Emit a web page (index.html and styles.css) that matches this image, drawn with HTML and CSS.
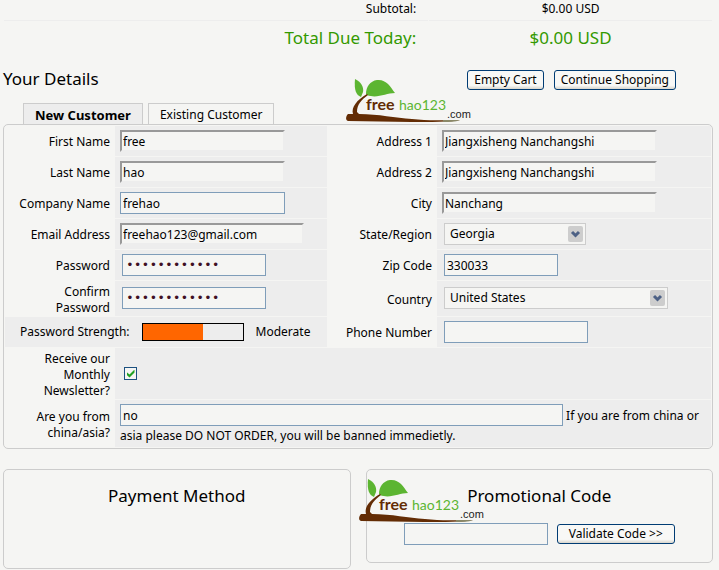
FILE: index.html
```html
<!DOCTYPE html>
<html lang="en">
<head>
<meta charset="utf-8">
<meta name="viewport" content="width=device-width, initial-scale=1">
<title>Checkout</title>
<link rel="stylesheet" href="styles.css">
</head>
<body>
<main class="page">
  <table class="totals">
    <tr class="subtotal"><th scope="row">Subtotal:</th><td>$0.00 USD</td></tr>
    <tr class="total"><th scope="row">Total Due Today:</th><td>$0.00 USD</td></tr>
  </table>

  <form>
    <header class="details-head">
      <h2>Your Details</h2>
      <svg class="logo logo-top" viewBox="0 0 126 46">
        <path class="leaf" d="M9 1C15 4 18 9 17 14L15 19C10 17 8 12 9 1Z"/>
        <path class="leaf" d="M20 16C20 9 24 3 31 2C40 1 44 8 49 15C40 15 31 21 21 17Z"/>
        <path class="branch" d="M21 16L22 17C15 22 11 27 11 34L13 36C33 36 49 40 66 41C82 43 98 42 114 42C105 44 84 44 65 44L2 43C-1 42 0 38 2 36L7 36C5 29 11 22 21 16Z"/>
        <path class="tip" d="M97 42H114C109 44 104 44 97 44Z"/>
        <text class="logo-free" x="20" y="32">free</text>
        <text class="logo-hao" x="53" y="32">hao123</text>
        <text class="logo-com" x="101" y="40">.com</text>
      </svg>
      <div class="actions">
        <button type="button" class="btn">Empty Cart</button>
        <button type="button" class="btn">Continue Shopping</button>
      </div>
    </header>

    <nav class="tabs">
      <button type="button" class="tab active">New Customer</button>
      <button type="button" class="tab">Existing Customer</button>
    </nav>

    <section class="panel details">
      <label class="name" for="first">First Name</label>
      <div class="field"><input class="inset w-name" id="first" type="text" value="free"></div>
      <label class="name" for="addr1">Address 1</label>
      <div class="field"><input class="inset w-addr" id="addr1" type="text" value="Jiangxisheng Nanchangshi"></div>

      <label class="name" for="last">Last Name</label>
      <div class="field"><input class="inset w-name" id="last" type="text" value="hao"></div>
      <label class="name" for="addr2">Address 2</label>
      <div class="field"><input class="inset w-addr" id="addr2" type="text" value="Jiangxisheng Nanchangshi"></div>

      <label class="name" for="company">Company Name</label>
      <div class="field"><input class="w-name" id="company" type="text" value="frehao"></div>
      <label class="name" for="city">City</label>
      <div class="field"><input class="inset w-addr" id="city" type="text" value="Nanchang"></div>

      <label class="name" for="email">Email Address</label>
      <div class="field"><input class="inset w-email" id="email" type="text" value="freehao123@gmail.com"></div>
      <label class="name" for="state">State/Region</label>
      <div class="field indent"><span class="select w-state"><select id="state"><option>Georgia</option></select><svg class="arrow" viewBox="0 0 15 16"><rect width="15" height="16" rx="2"/><path d="M4 6l3.500 3.500L11 6"/></svg></span></div>

      <label class="name" for="pw">Password</label>
      <div class="field indent"><input class="w-std pw" id="pw" type="password" value="abcdefghijkl"></div>
      <label class="name" for="zip">Zip Code</label>
      <div class="field indent"><input class="w-zip" id="zip" type="text" value="330033"></div>

      <label class="name" for="pw2">Confirm Password</label>
      <div class="field indent tall"><input class="w-std pw" id="pw2" type="password" value="abcdefghijkl"></div>
      <label class="name" for="country">Country</label>
      <div class="field indent tall"><span class="select w-country"><select id="country"><option>United States</option></select><svg class="arrow" viewBox="0 0 15 16"><rect width="15" height="16" rx="2"/><path d="M4 6l3.500 3.500L11 6"/></svg></span></div>

      <div class="field strength">
        <span>Password Strength:</span>
        <span class="meter"><span class="meter-fill" style="width:60%"></span></span>
        <span>Moderate</span>
      </div>
      <label class="name" for="phone">Phone Number</label>
      <div class="field indent"><input class="w-std" id="phone" type="text"></div>

      <label class="name" for="news">Receive our Monthly Newsletter?</label>
      <div class="field wide news"><input class="check" id="news" type="checkbox" checked></div>

      <label class="name" for="asia">Are you from china/asia?</label>
      <div class="field wide note"><input class="w-asia" id="asia" type="text" value="no"> If you are from china or asia please DO NOT ORDER, you will be banned immedietly.</div>
    </section>

    <div class="cards">
      <section class="panel card payment"><h2>Payment Method</h2></section>
      <section class="panel card promo">
        <svg class="logo logo-promo" viewBox="0 0 126 46">
          <path class="leaf" d="M9 1C15 4 18 9 17 14L15 19C10 17 8 12 9 1Z"/>
          <path class="leaf" d="M20 16C20 9 24 3 31 2C40 1 44 8 49 15C40 15 31 21 21 17Z"/>
          <path class="branch" d="M21 16L22 17C15 22 11 27 11 34L13 36C33 36 49 40 66 41C82 43 98 42 114 42C105 44 84 44 65 44L2 43C-1 42 0 38 2 36L7 36C5 29 11 22 21 16Z"/>
          <path class="tip" d="M97 42H114C109 44 104 44 97 44Z"/>
          <text class="logo-free" x="20" y="32">free</text>
          <text class="logo-hao" x="53" y="32">hao123</text>
          <text class="logo-com" x="101" y="40">.com</text>
        </svg>
        <h2>Promotional Code</h2>
        <div class="promo-row">
          <input class="w-std" type="text" aria-label="Promotional Code">
          <button type="button" class="btn btn-wide">Validate Code &gt;&gt;</button>
        </div>
      </section>
    </div>
  </form>
</main>
</body>
</html>
```
FILE: styles.css
```css
* { box-sizing: border-box; }
body {
  margin: 0;
  background: #f5f5f3;
  color: #000;
  font: 12px/16px "Noto Sans", "Open Sans", sans-serif;
}
input, select, button { font: inherit; color: inherit; margin: 0; }
.page { padding: 0 6px 0 3px; }
h2 { margin: 0; font-size: 17px; line-height: 20px; font-weight: 400; }

.totals { width: 100%; border-collapse: separate; border-spacing: 1px 0; table-layout: fixed; }
.totals th { width: 60%; padding: 0 12px 0 0; text-align: right; font-weight: 400; }
.totals td { padding: 0; text-align: center; }
.subtotal > * { height: 21px; border-bottom: 1px solid #ededed; }
.subtotal > th, .subtotal > td { padding-bottom: 3px; }
.total > * { height: 33px; font-size: 17px; color: #390; }

.details-head { display: flex; position: relative; justify-content: space-between; align-items: center; height: 36px; margin-top: 8px; padding-right: 37px; }
.details-head h2 { padding-bottom: 3px; }
.actions { display: flex; gap: 10px; }
.btn {
  height: 20px;
  padding: 0 6px;
  line-height: 16px;
  border: 1px solid #003c74;
  border-radius: 3px;
  background: linear-gradient(#f8f8f6 80%, #d8d5cc);
}
.btn-wide { padding: 0 11px; }
.logo { position: absolute; width: 126px; height: 46px; overflow: visible; }
.logo-top { left: 343px; top: 16px; z-index: 1; }
.logo-promo { left: -8px; top: 8px; }
.leaf { fill: #5cb531; }
.branch { fill: #632c04; }
.tip { fill: #8a8868; }
.logo-free { font: bold 16px Lato, sans-serif; fill: #632c04; }
.logo-hao { font: 14px Lato, sans-serif; fill: #5cb531; }
.logo-com { font: 11px "Liberation Sans", sans-serif; fill: #222; }

.tabs { display: flex; gap: 5px; padding-left: 20px; margin-top: 5px; }
.tab { height: 21px; padding: 2px 11px 0; border: 1px solid #ccc; border-bottom: 0; background: none; }
.tab.active { background: #ededed; font-size: 13px; font-weight: 700; }

.panel { border: 1px solid #ccc; border-radius: 5px; }
.details {
  display: grid;
  grid-template-columns: 110px minmax(0, 212fr) 110px minmax(0, 274fr);
  grid-template-rows: repeat(5, 30px) 35px 30px 51px 47px;
  row-gap: 1px;
  padding: 1px;
}
.name { align-self: center; padding: 2px 5px 0; text-align: right; }
.field { padding: 4px 5px; background: #ededed; }
.indent { padding-left: 7px; }
.tall { padding-top: 6px; }
.wide { grid-column: span 3; }

input[type=text], input[type=password] {
  height: 22px;
  max-width: 100%;
  padding: 0 2px;
  border: 1px solid #7f9db9;
  background: #f5f5f3;
  display: block;
}
input.inset { padding: 0 1px; border: 2px solid; border-color: #999 #ededed #ededed #999; }
input[type=password] { padding-left: 3px; font: 13px/16px "Liberation Mono", monospace; color: #401025; }
.w-name { width: 165px; }
.w-email { width: 184px; }
.w-addr { width: 215px; }
.w-std { width: 144px; }
.w-zip { width: 114px; }
.w-state { width: 142px; }
.w-country { width: 224px; }
.w-asia { width: 443px; }

.select { position: relative; display: block; max-width: 100%; height: 22px; }
.select select { appearance: none; width: 100%; height: 22px; padding: 0 20px 0 5px; border: 1px solid #ccc; border-radius: 0; background: #f5f5f3; }
.arrow { position: absolute; right: 3px; top: 3px; width: 15px; height: 16px; pointer-events: none; }
.arrow rect { fill: #cdcdcd; }
.arrow path { fill: none; stroke: #4d6185; stroke-width: 3; }

.strength { grid-column: span 2; display: flex; align-items: center; gap: 12px; padding: 0 15px; }
.meter { width: 102px; height: 18px; border: 1px solid #000; }
.meter-fill { display: block; height: 100%; background: #f60; }

.news { display: flex; align-items: center; padding-left: 9px; }
.check { appearance: none; width: 13px; height: 13px; border: 1px solid #1c5180; background: #f5f5f3; display: grid; place-items: center; }
.check:checked::before { content: ""; width: 8px; height: 8px; background: #21a121; clip-path: polygon(0 30%, 38% 62%, 100% 0, 100% 38%, 38% 100%, 0 66%); }
.note { line-height: 20px; }
.note input[type=text] { display: inline-block; }

.cards { display: grid; grid-template-columns: 1fr 1fr; gap: 15px; align-items: start; margin-top: 20px; }
.card { position: relative; padding-top: 16px; text-align: center; }
.payment { height: 100px; }
.promo { height: 94px; }
.promo-row { display: flex; justify-content: center; align-items: center; gap: 9px; padding-top: 17px; }
```
